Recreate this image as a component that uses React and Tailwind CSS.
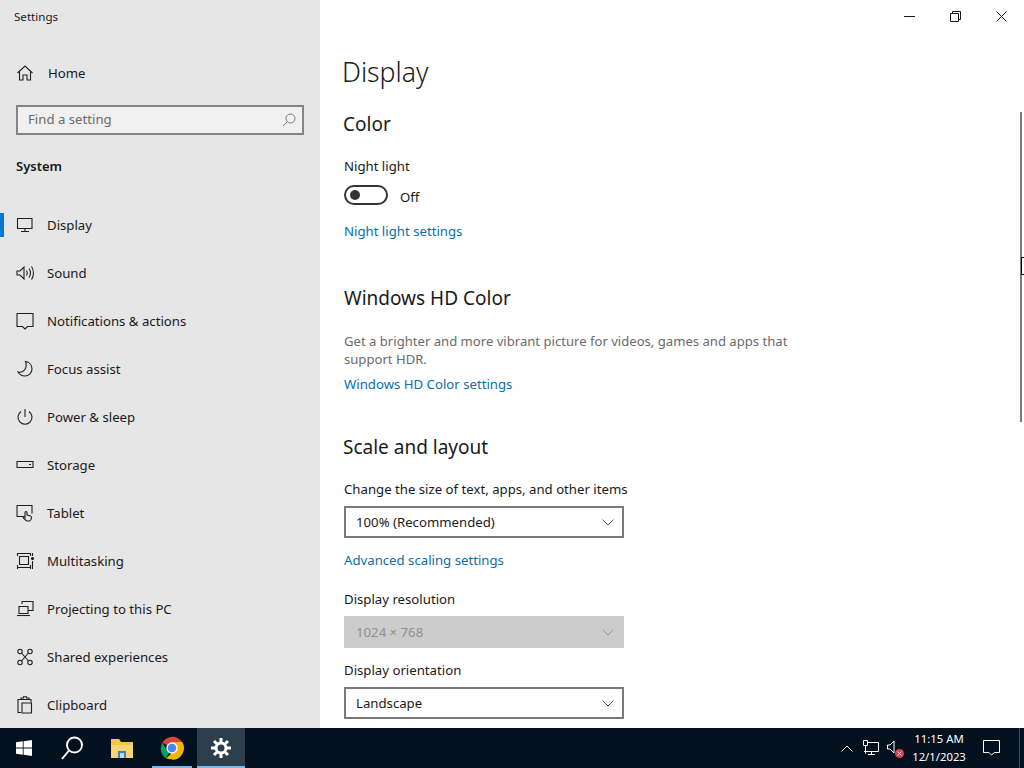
import React from "react";

const S = { fill: "none", stroke: "#1f1f1f", strokeWidth: 1.1 };
const Ic = ({ children, w = 18, h = 18, vb = "0 0 18 18", className = "" }) => (
  <svg width={w} height={h} viewBox={vb} className={"shrink-0 " + className} {...S}>{children}</svg>
);

const icons = {
  Display: <Ic><path d="M1.500 2.500h14.500v10h-14.500z" /><path d="M9 12.500v3M5 15.500h8" /></Ic>,
  Sound: <Ic><path d="M1 7v4h3l4 4V3L4 7z" /><path d="M10.500 6.500c1 1.500 1 3.500 0 5M13 4.500c1.800 2.700 1.800 6.300 0 9M15.500 2.500c2.600 3.800 2.600 9.200 0 13" /></Ic>,
  "Notifications & actions": <Ic><path d="M1 1.500h16v13h-5.500L9 17l-2.500-2.500H1z" /></Ic>,
  "Focus assist": <Ic><path d="M9.500 1.500c4 .5 6.500 3.700 6.500 7.500a7 7 0 0 1-7 7c-3 0-5.500-1.500-7-4 5 1.500 10-3.500 7.500-10.500z" /></Ic>,
  "Power & sleep": <Ic><path d="M9 1v8" /><path d="M5 3.500a7 7 0 1 0 8 0" /></Ic>,
  Storage: <Ic><path d="M1 5.500h16v6H1z" /><path d="M13 8.500h2" /></Ic>,
  Tablet: <Ic><path d="M7 12.500H1v-11h15v8" /><path d="M9.500 16c-1-.8-2-2-2.500-3 .5-.7 1.300-.3 2 .5V8.500c0-1.300 2-1.300 2 0V11l3 .7c1.300.3 1.600 1.300 1.500 2.300-.2 1.500-.8 2.500-2 3H11z" /></Ic>,
  Multitasking: <Ic><path d="M3.500 4.500h9v8h-9z" /><path d="M1 1.500h14M1 15.500h14M1.500 1v3M14.500 1v3M1.500 13v4M14.500 13v4M16.500 1v3M16.500 9v8" /><circle cx="16.500" cy="6.500" r="1" fill="#1f1f1f" /></Ic>,
  "Projecting to this PC": <Ic><path d="M6 4V1.500h11v9h-5" /><path d="M3 6.500h9v7H3z" /><path d="M1 15.500h13" /></Ic>,
  "Shared experiences": <Ic><circle cx="4" cy="3.500" r="2.200" /><circle cx="14" cy="3.500" r="2.200" /><circle cx="4" cy="14.500" r="2.200" /><circle cx="14" cy="14.500" r="2.200" /><path d="M5.500 5l7 8M12.500 5l-7 8" /></Ic>,
  Clipboard: <Ic><path d="M5 3.500H2v13h3" /><path d="M5 3.500V2h2.500V.8h3V2H13v1.500z" /><path d="M13 3.500h2v3" /><path d="M6 7h9.500v10H6z" /></Ic>,
};

const nav = ["Display","Sound","Notifications & actions","Focus assist","Power & sleep","Storage","Tablet","Multitasking","Projecting to this PC","Shared experiences","Clipboard"];

const Chevron = ({ c = "#555" }) => (
  <svg width="12" height="7" viewBox="0 0 12 7" fill="none" stroke={c} strokeWidth="1"><path d="M.5.500 6 6 11.500.500" /></svg>
);

const Select = ({ label }) => (
  <div className="w-[280px] h-[32px] border-2 border-[#7a7a7a] bg-white flex items-center justify-between pl-[10px] pr-[8px] mt-[7px]">
    <span className="text-[13.2px] leading-[18px] text-[#1a1a1a]">{label}</span>
    <Chevron />
  </div>
);

const Link = ({ children, className = "" }) => (
  <div className={"text-[13.2px] leading-[20px] text-[#0a6fa8] " + className}>{children}</div>
);
const Label = ({ children, className = "" }) => (
  <div className={"text-[13.2px] leading-[20px] text-[#1a1a1a] " + className}>{children}</div>
);
const Head = ({ children, className = "" }) => (
  <div className={"text-[19px] leading-[28px] text-[#1a1a1a] " + className}>{children}</div>
);

const Chrome = () => (
  <svg width="26" height="26" viewBox="0 0 48 48">
    <path d="M24 24 6.200 13.800A22 22 0 0 1 43.100 13H24z" fill="#db4437" />
    <path d="M24 24 13 43.100A22 22 0 0 1 6.200 13.800L15 29z" fill="#0f9d58" />
    <path d="M24 24h19.100A22 22 0 0 1 13 43.100L24 33z" fill="#f4b400" />
    <path d="M43.100 13A22 22 0 0 1 24 46l9.500-16.500L24 13z" fill="#f4b400" />
    <circle cx="24" cy="24" r="10.500" fill="#fff" />
    <circle cx="24" cy="24" r="8" fill="#4285f4" />
  </svg>
);

export default function App() {
  return (
    <div className="w-[1024px] h-[768px] overflow-hidden flex flex-col relative bg-white" style={{ fontFamily: '"Noto Sans", "Open Sans", sans-serif' }}>
      <div className="h-[728px] flex">
        <aside className="w-[320px] bg-[#e6e6e6] overflow-hidden pt-[8px]">
          <div className="text-[11.6px] leading-[18px] text-[#1a1a1a] pl-[14px]">Settings</div>
          <div className="h-[48px] mt-[23px] flex items-center pl-[16px] gap-[14px]">
            <Ic><path d="M1.500 9 9 2l7.500 7" /><path d="M3.500 7.500V16H7v-5h4v5h3.500V7.500" /></Ic>
            <span className="text-[13.2px] leading-[18px] text-[#1a1a1a]">Home</span>
          </div>
          <div className="mx-[16px] h-[30px] mt-[8px] border-2 border-[#858585] bg-[#f0f0f0] flex items-center justify-between pl-[10px] pr-[6px]">
            <span className="text-[13.2px] leading-[18px] text-[#6b6b6b] mb-[2px]">Find a setting</span>
            <svg width="14" height="14" viewBox="0 0 14 14" fill="none" stroke="#777" strokeWidth="1"><circle cx="8.500" cy="5.500" r="4.500" /><path d="M5.300 8.700 1 13" /></svg>
          </div>
          <div className="text-[13px] leading-[20px] font-semibold text-[#1a1a1a] pl-[16px] mt-[21px]">System</div>
          <nav className="mt-[25px]">
            {nav.map((n, i) => (
              <div key={n} className="h-[48px] flex items-center pl-[16px] gap-[13px] relative">
                {i === 0 && <div className="absolute left-0 top-[12px] w-[4px] h-[24px] bg-[#0078d7]" />}
                {icons[n]}
                <span className="text-[13.2px] leading-[18px] text-[#1a1a1a]">{n}</span>
              </div>
            ))}
          </nav>
        </aside>
        <main className="flex-1 relative overflow-hidden">
          <div className="h-[32px] flex justify-end items-center">
            <div className="w-[46px] flex justify-center"><svg width="11" height="11" viewBox="0 0 11 11" stroke="#1a1a1a" fill="none"><path d="M0 5.500h11" /></svg></div>
            <div className="w-[46px] flex justify-center"><svg width="11" height="11" viewBox="0 0 11 11" stroke="#1a1a1a" fill="none"><path d="M.5 2.500h8v8h-8z" /><path d="M2.500 2.500v-2h8v8h-2" /></svg></div>
            <div className="w-[46px] flex justify-center"><svg width="11" height="11" viewBox="0 0 11 11" stroke="#1a1a1a" fill="none"><path d="M.5.500l10 10M10.500.500l-10 10" /></svg></div>
          </div>
          <div className="pl-[24px]">
            <div className="text-[26.6px] leading-[40px] font-light text-[#1a1a1a] mt-[20px] -ml-[2px]">Display</div>
            <Head className="mt-[18px] -ml-[1px]">Color</Head>
            <Label className="mt-[18px]">Night light</Label>
            <div className="mt-[9px] h-[20px] flex items-center gap-[12px]">
              <div className="w-[44px] h-[20px] rounded-full border-2 border-[#333] flex items-center pl-[4px]">
                <div className="w-[10px] h-[10px] rounded-full bg-[#333]" />
              </div>
              <span className="text-[13.2px] leading-[18px] mt-[3px] text-[#1a1a1a]">Off</span>
            </div>
            <Link className="mt-[16px]">Night light settings</Link>
            <Head className="mt-[43px]">Windows HD Color</Head>
            <div className="mt-[20px] w-[460px] text-[13.1px] leading-[18px] text-[#6b6b6b]">Get a brighter and more vibrant picture for videos, games and apps that support HDR.</div>
            <Link className="mt-[6px]">Windows HD Color settings</Link>
            <Head className="mt-[39px] -ml-[1px]">Scale and layout</Head>
            <Label className="mt-[18px]">Change the size of text, apps, and other items</Label>
            <Select label="100% (Recommended)" />
            <Link className="mt-[12px]">Advanced scaling settings</Link>
            <Label className="mt-[19px]">Display resolution</Label>
            <div className="w-[280px] h-[32px] bg-[#cccccc] flex items-center justify-between pl-[12px] pr-[10px] mt-[7px]">
              <span className="text-[13.2px] leading-[18px] text-[#8f8f8f]">1024 × 768</span>
              <Chevron c="#999" />
            </div>
            <Label className="mt-[12px]">Display orientation</Label>
            <Select label="Landscape" />
          </div>
          <div className="absolute left-[700px] top-[112px] w-[2px] h-[310px] bg-[#7d7d7d]" />
          <svg className="absolute left-[701px] top-[257px]" width="3" height="18" viewBox="0 0 3 18" fill="none" stroke="#000"><path d="M3 .500H.500v17H3" /></svg>
        </main>
      </div>
      <footer className="h-[40px] bg-[#03111f] flex items-stretch text-white">
        <div className="w-[48px] flex items-center justify-center">
          <svg width="16" height="16" viewBox="0 0 16 16" fill="#fff"><path d="M0 2.300 6.800 1.300v6.300H0zM7.600 1.200 16 0v7.600H7.600zM0 8.400h6.800v6.300L0 13.700zM7.600 8.400H16V16l-8.400-1.200z" /></svg>
        </div>
        <div className="w-[48px] flex items-center justify-center">
          <svg width="22" height="25" viewBox="0 0 22 25" fill="none" stroke="#fff" strokeWidth="1.900"><circle cx="13.500" cy="9" r="7.500" /><path d="M8 14.500 1 23" /></svg>
        </div>
        <div className="w-[52px] flex items-center justify-center">
          <svg width="22" height="20" viewBox="0 0 22 20"><path d="M0 1h8l2 3h12v16H0z" fill="#f0c850" /><path d="M0 7h22v13H0z" fill="#f7d774" /><path d="M7 13h8v7H7z" fill="#3f86b5" /><path d="M9 15h4v5H9z" fill="#bfd7e6" /></svg>
        </div>
        <div className="w-[48px] flex items-center justify-center relative">
          <Chrome />
          <div className="absolute bottom-0 left-[4px] right-[4px] h-[2px] bg-[#76b9ed]" />
        </div>
        <div className="w-[48px] ml-[1px] bg-[#2e3f4c] flex items-center justify-center relative">
          <svg width="20" height="20" viewBox="0 0 20 20" fill="none" stroke="#fff" strokeWidth="3"><circle cx="10" cy="10" r="5" /><path d="M10 0v4M10 16v4M0 10h4M16 10h4M3 3l2.800 2.800M14.200 14.200 17 17M17 3l-2.800 2.800M5.800 14.200 3 17" /></svg>
          <div className="absolute bottom-0 left-0 right-0 h-[2px] bg-[#76b9ed]" />
        </div>
        <div className="ml-auto flex items-center pr-[4px]">
          <svg className="mr-[10px]" width="12" height="7" viewBox="0 0 12 7" fill="none" stroke="#fff"><path d="M.5 6.500 6 1l5.500 5.500" /></svg>
          <svg className="mr-[8px]" width="16" height="16" viewBox="0 0 16 16" fill="none" stroke="#fff"><path d="M4 2.500h11.500v9H1" /><path d="M8.500 11.500v3M5 14.500h7" /><path d="M.5.500h4v5h-4z" fill="#03111f" /><path d="M2.500 5.500v8" /></svg>
          <div className="relative w-[18px] h-[16px] mr-[4px]">
            <svg width="10" height="14" viewBox="0 0 10 14" fill="none" stroke="#fff"><path d="M.5 5v4h2.500l4 4V1L3 5z" /></svg>
            <div className="absolute right-[1px] bottom-[-2px] w-[9px] h-[9px] rounded-full bg-[#d9404f] flex items-center justify-center">
              <svg width="5" height="5" viewBox="0 0 5 5" stroke="#ffd5da"><path d="M.5.500l4 4M4.500.500l-4 4" /></svg>
            </div>
          </div>
          <div className="w-[60px] flex flex-col items-center text-[11.3px] leading-[18px] text-white">
            <span>11:15 AM</span>
            <span>12/1/2023</span>
          </div>
          <div className="w-[44px] mr-[6px] flex justify-center">
            <svg width="17" height="16" viewBox="0 0 17 16" fill="none" stroke="#fff"><path d="M.5.500h16v12h-5L8.500 15l-2.500-2.500H.5z" /></svg>
          </div>
          <div className="w-[1px] h-[40px] bg-[#3a4a57]" />
        </div>
      </footer>
    </div>
  );
}
